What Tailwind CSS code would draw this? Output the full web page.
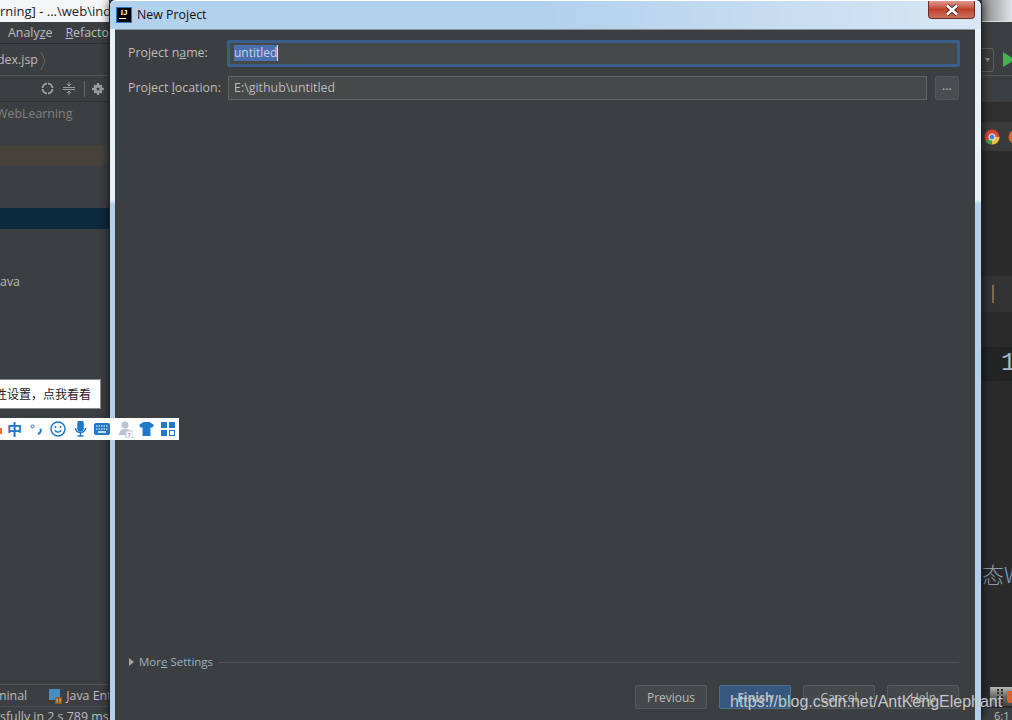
<!DOCTYPE html>
<html lang="en">
<head>
<meta charset="utf-8">
<title>New Project</title>
<script src="https://cdn.jsdelivr.net/npm/@tailwindcss/browser@4"></script>
</head>
<body class="w-[1012px] h-[720px] overflow-hidden">
<div class="relative flex w-[1012px] h-[720px] overflow-hidden bg-[#3c3f41] font-['Open_Sans','Noto_Sans_CJK_SC',sans-serif] text-[12.4px] text-[#bbbbbb]">

    <!-- IDE behind, left part -->
    <div class="w-[109px] shrink-0 flex flex-col whitespace-nowrap overflow-hidden">
        <div class="h-[22px] shrink-0 bg-[#f4f5f6] text-[#222222] text-[13px] leading-[22px]">rning] - ...\web\index</div>
        <div class="h-[22px] shrink-0 flex gap-[13px] pl-[8px] leading-[22px] border-b border-[#2d2f30]"><span>Analy<u>z</u>e</span><span><u>R</u>efactor</span></div>
        <div class="h-[32px] shrink-0 flex items-center gap-[2px] pt-[2px] -ml-[3px] border-b border-[#555555]">
            <span>dex.jsp</span>
            <svg class="shrink-0" width="6" height="20" viewBox="0 0 6 20" fill="none" stroke="#666666"><path d="M1 1l4 9-4 9"/></svg>
        </div>
        <div class="h-[26px] shrink-0 flex items-center pl-[41px] border-b border-[#323232]">
            <svg class="shrink-0" width="13" height="13" viewBox="0 0 13 13" fill="none" stroke="#9a9c9e" stroke-width="2"><circle cx="6.500" cy="6.500" r="5"/><path d="M6.500 0v3M6.500 10v3M0 6.500h3M10 6.500h3" stroke="#3c3f41" stroke-width="1"/></svg>
            <svg class="ml-[9px] shrink-0" width="12" height="13" viewBox="0 0 12 13" fill="none" stroke="#9a9c9e"><path d="M0 5.500h12M0 7.500h12M6 0v3.500M6 9.500V13M4 2l2 2 2-2M4 11l2-2 2 2"/></svg>
            <div class="ml-[9px] w-px h-[16px] shrink-0 bg-[#666666]"></div>
            <svg class="ml-[7px] shrink-0" width="12" height="12" viewBox="0 0 12 12" fill="#9a9c9e"><circle cx="6" cy="6" r="4.500"/><path d="M5 0h2v12H5zM0 5h12v2H0z"/><path d="M1.500 2.900l1.400-1.400 7.600 7.600-1.400 1.400zM9.100 1.500l1.400 1.400-7.600 7.600-1.400-1.400z"/><circle cx="6" cy="6" r="1.500" fill="#3c3f41"/></svg>
        </div>
        <div class="h-[21px] shrink-0 mt-[1px] -ml-[4px] text-[#808080] leading-[21px]">WebLearning</div>
        <div class="h-[21px] shrink-0 mt-[21px] bg-[#45423b]"></div>
        <div class="h-[21px] shrink-0 mt-[42px] bg-[#0d293e]"></div>
        <div class="mt-[43px] leading-[20px]">ava</div>
        <div class="flex-1"></div>
        <div class="h-[22px] shrink-0 flex items-center pt-px border-t border-[#555555] -ml-[5px]">
            <span>minal</span>
            <svg class="ml-[22px] shrink-0" width="13" height="15" viewBox="0 0 13 15"><rect width="11" height="11" fill="#4a8cc0"/><rect x="6" y="8" width="7" height="7" fill="#8a5a22"/><path d="M8 9.500v4M11 9.500v4" stroke="#e8c070"/></svg>
            <span class="ml-[4px]">Java Enterprise</span>
        </div>
        <div class="h-[14px] shrink-0 leading-[20px] border-t border-[#4a4c4e]">sfully in 2 s 789 ms</div>
    </div>

    <!-- dialog -->
    <div class="w-[873px] shrink-0 flex flex-col relative rounded-t-[6px] border-x border-[#20252b] bg-[linear-gradient(to_bottom,#b2d1ec_0,#b2d1ec_28px,#e8f0f8_28px,#e8f0f8_200px,#b3cfe9_204px)] px-[5px] shadow-[0_0_10px_rgba(0,0,0,0.7)]">
        <div class="h-[29px] shrink-0 flex items-center -mx-[5px] px-[6px] border-t border-white rounded-t-[6px] bg-gradient-to-r from-[#b2d1ec] via-[#b2d1ec] to-[#d8e7f4]">
            <div class="w-[16px] h-[16px] shrink-0 bg-black border border-[#2a74c8] flex flex-col items-center pt-[1px]">
                <span class="text-white text-[8px] leading-[8px] font-bold font-['Liberation_Sans',sans-serif]">IJ</span>
                <div class="w-[7px] h-px bg-white mt-[1px] -ml-[3px]"></div>
            </div>
            <span class="ml-[5px] text-[#111111]">New Project</span>
            <div class="ml-auto self-start w-[47px] h-[18px] rounded-b-[4px] border border-t-0 border-[#6b2a25] bg-gradient-to-b from-[#d99a8f] via-[#c2402b] to-[#c8705c] flex items-center justify-center">
                <svg width="16" height="12" viewBox="0 0 16 12"><path d="M3 1.500l10 9M13 1.500l-10 9" stroke="#4a3030" stroke-width="4.500"/><path d="M3 1.500l10 9M13 1.500l-10 9" stroke="#ffffff" stroke-width="2.500"/></svg>
            </div>
        </div>
        <div class="flex-1 flex flex-col bg-[#3c3f41] border-t border-[#8a9199] pl-[13px] pr-[16px] mr-px">
            <div class="mt-[10px] flex items-center h-[27px] -mr-px">
                <span class="w-[99px] shrink-0">Project n<u>a</u>me:</span>
                <div class="flex-1 h-[27px] bg-[#45494a] border-[3px] border-[#3a5f8a] rounded-[2px] pl-[4px] pb-[2px] flex items-center text-[12px]">
                    <span class="bg-[#4b6eaf] text-[#c8d2e6] leading-[16px] border-r border-[#dddddd]">untitled</span>
                </div>
            </div>
            <div class="mt-[9px] flex items-center h-[24px]">
                <span class="w-[100px] shrink-0">Project <u>l</u>ocation:</span>
                <div class="w-[699px] h-[24px] bg-[#45494a] border border-[#646464] pl-[5px] leading-[22px]">E:\github\untitled</div>
                <div class="ml-[8px] w-[24px] h-[24px] rounded-[2px] bg-[#4a4d4f] border border-[#555759] text-center leading-[18px]">...</div>
            </div>
            <div class="flex-1"></div>
            <div class="flex items-center h-[14px]">
                <svg class="ml-px shrink-0" width="5" height="8" viewBox="0 0 5 8" fill="#a0a2a4"><path d="M0 0l5 4-5 4z"/></svg>
                <span class="ml-[5px] text-[#9fb0c0] text-[11.500px]">Mor<u>e</u> Settings</span>
                <div class="ml-[6px] flex-1 h-px bg-[#4e5153]"></div>
            </div>
            <div class="mt-[16px] mb-[11px] flex justify-end gap-[12px] text-center leading-[23px] text-[12px]">
                <div class="w-[72px] h-[24px] bg-[#45484a] border border-[#56595b] rounded-[2px]">Previous</div>
                <div class="w-[72px] h-[24px] bg-[#365880] border border-[#4c708c] rounded-[2px] font-bold">Finish</div>
                <div class="w-[72px] h-[24px] bg-[#45484a] border border-[#56595b] rounded-[2px]">Cancel</div>
                <div class="w-[72px] h-[24px] bg-[#45484a] border border-[#56595b] rounded-[2px]">Help</div>
            </div>
        </div>
    </div>

    <!-- IDE behind, right part -->
    <div class="flex-1 min-w-0 flex flex-col bg-[#2b2b2b] overflow-hidden whitespace-nowrap">
        <div class="h-[21px] shrink-0 bg-gradient-to-r from-[#8a8a8a] to-[#dfe4ea]"></div>
        <div class="h-[23px] shrink-0 bg-[#3c3f41] border-t border-[#dddddd]"></div>
        <div class="h-[32px] shrink-0 bg-[#3c3f41] border-b border-[#555555] flex items-center">
            <div class="w-[12px] h-[24px] shrink-0 rounded-r-[3px] border border-l-0 border-[#5e6060] flex items-center justify-center">
                <svg width="5" height="4" viewBox="0 0 5 4" fill="#8a8a8a"><path d="M0 0h5L2.500 4z"/></svg>
            </div>
            <svg class="ml-[9px] shrink-0" width="12" height="15" viewBox="0 0 12 15" fill="#3fb44f"><path d="M0 0l12 7.500L0 15z"/></svg>
        </div>
        <div class="h-[26px] shrink-0 bg-[#3c3f41]"></div>
        <div class="h-[20px] shrink-0 bg-[#2f2f2f]"></div>
        <div class="h-[29px] shrink-0 bg-[#3a3a3a] flex items-center pl-[2px] gap-[8px]">
            <svg class="shrink-0" width="16" height="16" viewBox="0 0 16 16"><circle cx="8" cy="8" r="7.500" fill="#d8443a"/><path d="M8 8L1.500 12A7.500 7.500 0 0 0 8 15.500z" fill="#3f9f4a"/><path d="M8 8l6.500 4A7.500 7.500 0 0 1 8 15.500zM8 8h7.500a7.500 7.500 0 0 1-1 4z" fill="#e6bf3b"/><circle cx="8" cy="8" r="3.500" fill="#f4f4f4"/><circle cx="8" cy="8" r="2.500" fill="#4a80c8"/></svg>
            <svg class="shrink-0" width="14" height="16" viewBox="0 0 14 16"><circle cx="8" cy="8" r="7.500" fill="#d8622a"/><circle cx="9" cy="8" r="3.500" fill="#6a5a7a"/></svg>
        </div>
        <div class="h-[125px] shrink-0"></div>
        <div class="h-[36px] shrink-0 bg-[#323232] flex items-center pl-[10px]"><div class="w-[2px] h-[18px] bg-[#7a6a52]"></div></div>
        <div class="h-[35px] shrink-0"></div>
        <div class="h-[34px] shrink-0 bg-[#232525] pl-[19px] text-[#a9b7c6] text-[25px] leading-[34px] font-['Liberation_Mono',monospace]">1</div>
        <div class="h-[177px] shrink-0"></div>
        <div class="h-[30px] shrink-0 text-[#8a9aa8] text-[22px] leading-[30px] font-['Noto_Sans_CJK_SC',sans-serif] font-light">态<span class="text-[#6f9fd0]">W</span></div>
        <div class="flex-1"></div>
        <div class="h-[19px] shrink-0 pl-[8px] flex mb-[2px]">
            <div class="flex-1 bg-gradient-to-b from-[#b8b8b8] via-[#6a6a6a] to-[#454545] flex items-center pl-[7px] gap-[4px]">
                <div class="w-[6px] h-[16px] shrink-0 border-x-2 border-dotted border-[#2a2a2a]"></div>
                <div class="w-[6px] h-[12px] shrink-0 rounded-b-[3px] bg-[#d8622a]"></div>
            </div>
        </div>
        <div class="h-[12px] shrink-0 bg-[#3c3f41] pl-[12px] text-[11px] leading-[16px]">6:1</div>
    </div>

    <!-- input method hint over the page -->
    <div class="absolute left-0 top-[379px] w-[101px] h-[30px] bg-white border border-l-0 border-[#8a8a8a] text-[#222222] text-[12px] leading-[28px] whitespace-nowrap overflow-hidden font-['Noto_Sans_CJK_SC',sans-serif]"><span class="block -ml-[5px]">性设置，点我看看</span></div>

    <!-- input method toolbar -->
    <div class="absolute left-0 top-[418px] w-[179px] h-[22px] bg-white flex items-center">
        <div class="w-[2px] h-[6px] mt-[3px] shrink-0 bg-[#e8703a]"></div>
        <span class="ml-[5px] w-[15px] shrink-0 text-[#1f78c8] text-[15px] leading-[22px] font-bold font-['Noto_Sans_CJK_SC',sans-serif]">中</span>
        <svg class="ml-[8px] shrink-0" width="13" height="13" viewBox="0 0 13 13" fill="none" stroke="#1f78c8"><circle cx="2.500" cy="3.500" r="1.500"/><path d="M10 6c1.500 1 1 3.500-2 5" stroke-width="2"/></svg>
        <svg class="ml-[7px] shrink-0" width="16" height="16" viewBox="0 0 16 16" fill="none" stroke="#1f78c8" stroke-width="1.500"><circle cx="8" cy="8" r="7"/><path d="M5 9c1 3 5 3 6 0"/><path d="M5.500 5v2M10.500 5v2"/></svg>
        <svg class="ml-[8px] shrink-0" width="13" height="16" viewBox="0 0 13 16" fill="none" stroke="#1f78c8" stroke-width="1.500"><rect x="4" y="0" width="5" height="10" rx="2.500" fill="#1f78c8"/><path d="M1.500 7c0 6 10 6 10 0M6.500 12v3M3.500 15h6"/></svg>
        <svg class="ml-[7px] shrink-0" width="16" height="12" viewBox="0 0 16 12"><rect width="16" height="12" rx="2" fill="#1f78c8"/><path d="M2 3h12M2 6h12" stroke="#ffffff" stroke-dasharray="1.500 1"/><path d="M4 9h8" stroke="#ffffff" stroke-width="1.500"/></svg>
        <svg class="ml-[8px] shrink-0" width="15" height="17" viewBox="0 0 15 17" fill="#b8c4d0"><circle cx="7" cy="4" r="3.500"/><path d="M1 14c0-4 2-6 6-6s6 2 6 6z"/><rect x="8" y="10" width="7" height="7" rx="1" fill="#ffffff" stroke="#b8c4d0"/><text x="9.500" y="16" font-size="6" font-weight="700" fill="#9aa8b6" font-family="Liberation Sans">7</text></svg>
        <svg class="ml-[6px] shrink-0" width="15" height="14" viewBox="0 0 15 14" fill="#1f78c8"><path d="M4.500 0h6L15 3l-2 3-1.500-1v9h-8V5L2 6 0 3z"/></svg>
        <svg class="ml-[7px] shrink-0" width="14" height="14" viewBox="0 0 14 14" fill="#1f78c8"><rect width="6" height="6"/><rect x="8" width="6" height="6"/><rect y="8" width="6" height="6"/><rect x="8.500" y="8.500" width="5" height="5" fill="none" stroke="#1f78c8"/></svg>
    </div>

    <!-- watermark -->
    <div class="absolute left-[730px] top-[692px] text-[16px] leading-[20px] text-[#c4c7c9] whitespace-nowrap font-['Liberation_Sans',sans-serif]">https://blog.csdn.net/AntKengElephant</div>
</div>
</body>
</html>
